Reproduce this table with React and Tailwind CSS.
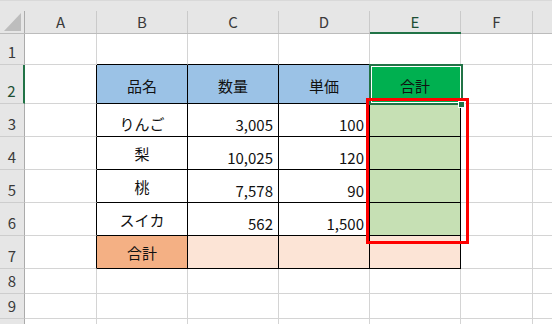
import React from "react";

const COLS = ["A", "B", "C", "D", "E", "F", "G"];

const DATA = {
  2: { B: "品名", C: "数量", D: "単価", E: "合計" },
  3: { B: "りんご", C: "3,005", D: "100" },
  4: { B: "梨", C: "10,025", D: "120" },
  5: { B: "桃", C: "7,578", D: "90" },
  6: { B: "スイカ", C: "562", D: "1,500" },
  7: { B: "合計" },
};

const TABLE_COLS = ["B", "C", "D", "E"];

function bgFor(r, c) {
  if (r === 2 && (c === "B" || c === "C" || c === "D")) return "bg-[#9bc2e6]";
  if (r === 2 && c === "E") return "bg-[#00b050]";
  if (r >= 3 && r <= 6 && c === "E") return "bg-[#c6e0b4]";
  if (r === 7 && c === "B") return "bg-[#f4b084]";
  if (r === 7 && (c === "C" || c === "D" || c === "E")) return "bg-[#fce4d6]";
  return "bg-white";
}

function Cell({ r, c }) {
  const inTable = TABLE_COLS.includes(c) && r >= 2 && r <= 7;
  const rightBlack = inTable || (c === "A" && r >= 2 && r <= 7);
  const bottomBlack = TABLE_COLS.includes(c) && r >= 1 && r <= 7;
  const rightCls = c === "G" ? "border-r-0" : rightBlack ? "border-r border-r-black" : "border-r border-r-[#d4d4d4]";
  const bottomCls = bottomBlack ? "border-b border-b-black" : "border-b border-b-[#d4d4d4]";
  const text = DATA[r] && DATA[r][c];
  const isNum = (c === "C" || c === "D") && r >= 3 && r <= 6;
  let align;
  if (isNum) align = "justify-end items-end pr-[5px] pb-[4px]";
  else if (r === 3) align = "justify-center items-end pb-[5px]";
  else if (r === 2) align = "justify-center items-center pt-[3px]";
  else align = "justify-center items-center";
  return (
    <div className={`flex min-w-0 ${rightCls} ${bottomCls} ${bgFor(r, c)} ${align}`}>
      {text ? <span className="leading-[15px] text-[15px] text-[#111] whitespace-nowrap">{text}</span> : null}
    </div>
  );
}

function ColHeader({ label, selected, last }) {
  return (
    <div
      className={`flex bg-[#e6e6e6] ${selected ? "border-b-2 border-b-[#217346]" : "border-b border-b-[#bcbcbc]"}`}
    >
      <div className={`flex-1 flex items-end justify-center ${selected ? "pb-[3px]" : "pb-[4px]"}`}>
        {!last ? (
          <span className={`leading-[15px] text-[15px] ${selected ? "text-[#1d4f34]" : "text-[#3a3a3a]"}`}>{label}</span>
        ) : null}
      </div>
      {!last ? <div className="w-px mt-[10px] bg-[#cacaca]" /> : null}
    </div>
  );
}

function RowHeader({ n }) {
  const sel = n === 2;
  return (
    <div
      className={`flex items-end justify-center pb-[5px] bg-[#e6e6e6] border-b border-b-[#cdcdcd] ${
        sel ? "border-r-2 border-r-[#217346]" : "border-r border-r-[#ababab]"
      }`}
    >
      {n <= 9 ? (
        <span className={`leading-[15px] text-[15px] ${sel ? "text-[#1d4f34]" : "text-[#3a3a3a]"}`}>{n}</span>
      ) : null}
    </div>
  );
}

export default function App() {
  const rows = [1, 2, 3, 4, 5, 6, 7, 8, 9, 10];
  return (
    <div
      className="w-[552px] h-[324px] overflow-hidden bg-white flex flex-col"
      style={{ fontFamily: '"Noto Sans CJK JP", "Noto Sans", sans-serif' }}
    >
      <div className="h-[2px] bg-[#f2f2f2] border-b border-b-[#d9d9d9]" />
      <div className="relative flex-1 grid grid-cols-[25px_72px_91px_91px_91px_91px_72px_1fr] grid-rows-[33px_31px_39px_33px_33px_33px_33px_33px_25px_25px_1fr]">
        {/* corner */}
        <div className="flex bg-[#e6e6e6] border-b border-b-[#bcbcbc]">
          <div className="flex-1 flex items-end justify-end pr-[3px] pb-[2px]">
            <svg width="17" height="18" viewBox="0 0 17 18">
              <polygon points="17,0 17,18 0,18" fill="#bdbdbd" />
            </svg>
          </div>
          <div className="w-px mt-[10px] bg-[#ababab]" />
        </div>
        {COLS.map((c) => (
          <ColHeader key={c} label={c} selected={c === "E"} last={c === "G"} />
        ))}
        {rows.map((r) => (
          <React.Fragment key={r}>
            <RowHeader n={r} />
            {COLS.map((c) => (
              <Cell key={c} r={r} c={c} />
            ))}
          </React.Fragment>
        ))}

        {/* active cell selection E2 */}
        <div className="absolute left-[369px] top-[63px] w-[94px] h-[41px] border-2 border-[#217346]">
          <div className="w-full h-full border border-white" />
        </div>
        {/* red highlight */}
        <div className="absolute left-[366px] top-[97px] w-[103px] h-[146px] border-[3px] border-[#ff0000]" />
        {/* fill handle */}
        <div className="absolute left-[458px] top-[100px] w-[7px] h-[7px] border border-white bg-[#217346]" />
      </div>
    </div>
  );
}
